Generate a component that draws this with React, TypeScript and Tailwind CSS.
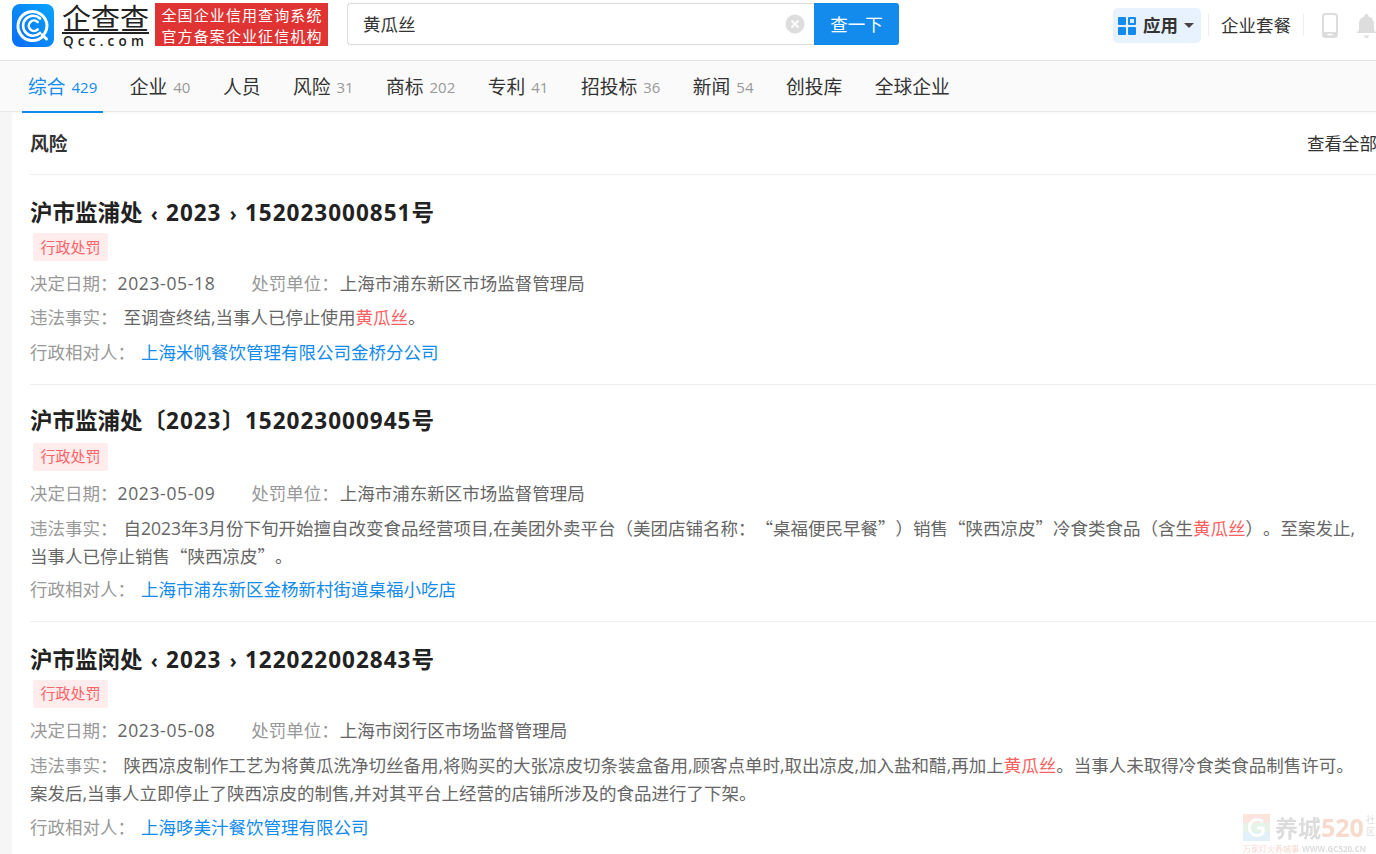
import React from "react";

const tabs: [string, string?][] = [
  ["企业", "40"], ["人员"], ["风险", "31"], ["商标", "202"], ["专利", "41"], ["招投标", "36"], ["新闻", "54"], ["创投库"], ["全球企业"],
];

const C = "\uFF1A";
const L = "\uFF08";
const R = "\uFF09";
const Lq = "\u201C";
const Rq = "\u201D";

function Logo() {
  return (
    <svg width="42" height="43" viewBox="0 0 42 43" className="shrink-0">
      <defs>
        <linearGradient id="lg" x1="0" y1="1" x2="1" y2="0">
          <stop offset="0" stopColor="#0a6cf5" />
          <stop offset="1" stopColor="#08a5ff" />
        </linearGradient>
      </defs>
      <rect width="42" height="43" rx="8" fill="url(#lg)" />
      <path d="M31.5 31.5A14.500 14.500 0 1 1 35 21.500c0 3-.8 5.500-2.200 7.600" fill="none" stroke="#fff" strokeWidth="3" strokeLinecap="round" />
      <path d="M28 14.500A10 10 0 1 0 28 29" fill="none" stroke="#fff" strokeWidth="2.600" strokeLinecap="round" />
      <path d="M25.600 18A5.200 5.200 0 1 0 25.600 25.500" fill="none" stroke="#fff" strokeWidth="2.600" strokeLinecap="round" />
      <path d="M30 30.500l4.500 4.500" stroke="#fff" strokeWidth="3" strokeLinecap="round" />
    </svg>
  );
}

function Tag({ mt = "mt-[5px]" }: { mt?: string }) {
  return (
    <div className={`ml-[3px] ${mt} flex h-[28px] w-[75px] items-center justify-center rounded-[2px] bg-[#ffecec] text-[15px] text-[#fb6468]`}>行政处罚</div>
  );
}

function Row({ label, children, mt }: { label: string; children: React.ReactNode; mt: string }) {
  return (
    <div className={`${mt} w-[1328px] font-['Noto_Sans_CJK_SC',sans-serif] text-[17.5px] leading-[28px] text-[#666] [text-spacing-trim:space-all]`}>
      <span className="text-[#999]">{label}</span>
      {children}
    </div>
  );
}

const Em = ({ children }: { children: React.ReactNode }) => <span className="text-[#fb5f5f]">{children}</span>;
const D = ({ children }: { children: React.ReactNode }) => <span className="font-['Open_Sans',sans-serif]">{children}</span>;
const Num = ({ children }: { children: React.ReactNode }) => <span className="tracking-[1px]">{children}</span>;
const Br = ({ children }: { children: React.ReactNode }) => <span className="inline-block w-[23.5px] text-center">{children}</span>;
const Ang = ({ children }: { children: React.ReactNode }) => <span className="inline-block w-[23.5px] text-center text-[19px] leading-none">{children}</span>;

// ASCII commas in the reference are narrower than the CJK font's own.
function T({ s }: { s: string }) {
  const parts = s.split(",");
  return (
    <>
      {parts.map((p, i) => (
        <React.Fragment key={i}>
          {p}
          {i < parts.length - 1 && <D>,</D>}
        </React.Fragment>
      ))}
    </>
  );
}

function Item(props: {
  title: React.ReactNode; date: string; org: string; fact: React.ReactNode; party: string; border?: boolean;
  pt: string; pb: string; tagMt?: string; dateMt: string; factMt: string; partyMt: string;
}) {
  return (
    <section className={`${props.pt} ${props.pb} ${props.border ? "border-b border-[#eee]" : ""}`}>
      <h3 className="text-[22.5px] font-bold leading-[30px] text-[#222]">{props.title}</h3>
      <Tag mt={props.tagMt} />
      <Row label={"决定日期" + C} mt={props.dateMt}>
        <span className="font-['Open_Sans',sans-serif] tracking-[0.65px]">{props.date}</span>
        <span className="ml-[36px] text-[#999]">{"处罚单位" + C}</span>
        <span className="ml-[1px]">{props.org}</span>
      </Row>
      <Row label={"违法事实" + C} mt={props.factMt}>
        <span className="ml-[6px]">{props.fact}</span>
      </Row>
      <Row label={"行政相对人" + C} mt={props.partyMt}>
        <span className="ml-[6px] text-[#128bed]">{props.party}</span>
      </Row>
    </section>
  );
}

export default function App() {
  return (
    <div className="relative h-[854px] w-[1376px] overflow-hidden bg-white font-['Open_Sans','Noto_Sans_CJK_SC',sans-serif]">
      <header className="flex h-[61px] items-start overflow-hidden border-b border-[#e6e6e6] bg-white [&>*]:shrink-0">
        <div className="ml-[12px] mt-[4px]"><Logo /></div>
        <div className="ml-[8px] mt-[1px] flex w-[87px] flex-col items-center text-[#222]">
          <div className="h-[33px] w-[87px] border-b-2 border-[#222] text-center font-['Noto_Sans_CJK_SC',sans-serif] text-[29px] leading-[32px]">企查查</div>
          <div className="mt-[1px] whitespace-nowrap text-[13.5px] font-semibold leading-[13px] tracking-[4.2px]">Qcc.com</div>
        </div>
        <div className="ml-[6px] mt-[3px] flex h-[43px] w-[173px] flex-col items-center justify-center bg-[#e03434] pl-[1px] font-['Noto_Sans_CJK_SC',sans-serif] text-[15px] leading-[21px] tracking-[1.1px] text-white">
          <div>全国企业信用查询系统</div>
          <div>官方备案企业征信机构</div>
        </div>
        <div className="ml-[19px] mt-[3px] flex h-[42px] w-[552px]">
          <div className="flex w-[467px] items-center justify-between rounded-l-[4px] border border-r-0 border-[#ddd] pl-[15px] pr-[9px] text-[17.5px] text-[#333]">
            <span>黄瓜丝</span>
            <svg width="20" height="20" viewBox="0 0 20 20">
              <circle cx="10" cy="10" r="9.500" fill="#ddd" />
              <path d="M6.500 6.500l7 7M13.500 6.500l-7 7" stroke="#fff" strokeWidth="1.800" />
            </svg>
          </div>
          <div className="flex w-[85px] items-center justify-center rounded-r-[3px] bg-[#128bed] text-[17.5px] text-white">查一下</div>
        </div>
        <div className="ml-[214px] mt-[8px] flex h-[35px] w-[88px] items-center rounded-[5px] bg-[#e8f2ff] pl-[5px]">
          <svg width="18" height="18" viewBox="0 0 18 18">
            <rect x="0" y="0" width="8" height="8" rx="1" fill="#128bed" />
            <rect x="10" y="0" width="8" height="8" rx="1" fill="#128bed" />
            <rect x="12" y="2" width="4" height="4" fill="#d6ebfd" />
            <rect x="0" y="10" width="8" height="8" rx="1" fill="#128bed" />
            <rect x="10" y="10" width="8" height="8" rx="1" fill="#128bed" />
          </svg>
          <span className="ml-[7px] text-[17.5px] font-bold text-[#333]">应用</span>
          <span className="ml-[6px] h-0 w-0 border-x-[5px] border-t-[5px] border-x-transparent border-t-[#444]" />
        </div>
        <div className="ml-[7px] mt-[14px] h-[22px] w-px bg-[#eee]" />
        <div className="ml-[12px] mt-[10px] whitespace-nowrap text-[17.5px] leading-[30px] text-[#333]">企业套餐</div>
        <div className="ml-[12px] mt-[14px] h-[22px] w-px bg-[#eee]" />
        <svg className="ml-[18px] mt-[13px]" width="16" height="25" viewBox="0 0 16 25">
          <rect x="1" y="1" width="14" height="23" rx="2.500" fill="none" stroke="#ddd" strokeWidth="2" />
          <rect x="1" y="19" width="14" height="5" rx="1.500" fill="#ddd" />
          <rect x="5.500" y="20.800" width="5" height="1.400" fill="#fff" />
        </svg>
        <svg className="ml-[18px] mt-[13px]" width="21" height="26" viewBox="0 0 21 26">
          <path d="M10.500 1c1.200 0 2 .8 2 2v.6c3.500.9 5.500 3.800 5.500 7.400v6l2.500 3H.5L3 17v-6c0-3.600 2-6.500 5.500-7.400V3c0-1.200.8-2 2-2z" fill="#ddd" />
          <path d="M8 22.500h5c0 1.500-1 2.500-2.500 2.500S8 24 8 22.500z" fill="#ddd" />
        </svg>
      </header>

      <nav className="flex h-[51px] items-start gap-[20.5px] border-b border-[#e8e8e8] bg-[#fafafa] pl-[22px] shadow-[0_1px_3px_rgba(0,0,0,0.04)]">
        <div className="flex h-[52px] items-center border-b-2 border-[#128bed] px-[6px] pt-[2px] text-[18.75px] text-[#128bed]">
          综合<span className="ml-[6px] text-[15px]">429</span>
        </div>
        {tabs.map(([name, n]) => (
          <div key={name} className="flex h-[52px] items-center border-b-2 border-transparent px-[6px] pt-[2px] text-[18.75px] text-[#333]">
            {name}
            {n && <span className="ml-[6px] text-[15px] text-[#999]">{n}</span>}
          </div>
        ))}
      </nav>

      <div className="flex">
        <div className="h-[742px] w-[12px] shrink-0 bg-[#f6f6f6]" />
        <main className="ml-[18px] w-[1347px] shrink-0">
          <div className="flex h-[63px] items-center justify-between border-b border-[#eee] pt-[1px]">
            <span className="pt-[1px] text-[18.75px] font-bold text-[#333]">风险</span>
            <span className="text-[17.5px] text-[#333]">查看全部</span>
          </div>
          <Item
            border
            pt="pt-[23px]"
            pb="pb-[17.5px]"
            dateMt="mt-[8px]"
            factMt="mt-[6px]"
            partyMt="mt-[7px]"
            title={<>沪市监浦处<Ang>‹</Ang><Num>2023</Num><Ang>›</Ang><Num>152023000851</Num>号</>}
            date="2023-05-18"
            org="上海市浦东新区市场监督管理局"
            fact={<><T s="至调查终结,当事人已停止使用" /><Em>黄瓜丝</Em>。</>}
            party="上海米帆餐饮管理有限公司金桥分公司"
          />
          <Item
            border
            pt="pt-[21px]"
            pb="pb-[18px]"
            tagMt="mt-[7px]"
            dateMt="mt-[8px]"
            factMt="mt-[7px]"
            partyMt="mt-[5px]"
            title={<>沪市监浦处<Br>〔</Br><Num>2023</Num><Br>〕</Br><Num>152023000945</Num>号</>}
            date="2023-05-09"
            org="上海市浦东新区市场监督管理局"
            fact={<>自<D>2023</D>年<D>3</D><T s={"月份下旬开始擅自改变食品经营项目,在美团外卖平台" + L + "美团店铺名称" + C + Lq + "桌福便民早餐" + Rq + R + "销售" + Lq + "陕西凉皮" + Rq + "冷食类食品" + L + "含生"} /><Em>黄瓜丝</Em><T s={R + "。至案发止,当事人已停止销售" + Lq + "陕西凉皮" + Rq + "。"} /></>}
            party="上海市浦东新区金杨新村街道桌福小吃店"
          />
          <Item
            pt="pt-[23px]"
            pb="pb-[18px]"
            dateMt="mt-[8px]"
            factMt="mt-[7px]"
            partyMt="mt-[6px]"
            title={<>沪市监闵处<Ang>‹</Ang><Num>2023</Num><Ang>›</Ang><Num>122022002843</Num>号</>}
            date="2023-05-08"
            org="上海市闵行区市场监督管理局"
            fact={<><T s="陕西凉皮制作工艺为将黄瓜洗净切丝备用,将购买的大张凉皮切条装盒备用,顾客点单时,取出凉皮,加入盐和醋,再加上" /><Em>黄瓜丝</Em><T s="。当事人未取得冷食类食品制售许可。案发后,当事人立即停止了陕西凉皮的制售,并对其平台上经营的店铺所涉及的食品进行了下架。" /></>}
            party="上海哆美汁餐饮管理有限公司"
          />
        </main>
      </div>

      <div className="absolute left-[1243px] top-[814px] flex items-start opacity-25 blur-[0.5px]">
        <svg width="27" height="27" viewBox="0 0 27 27">
          <rect width="27" height="9" fill="#f29a76" />
          <rect y="9" width="27" height="9" fill="#9ed2a8" />
          <rect y="18" width="27" height="9" fill="#8ec4e8" />
          <path d="M20 8a8 8 0 1 0 0 11v-5h-6" fill="none" stroke="#fff" strokeWidth="3" />
        </svg>
        <span className="ml-[5px] font-['Noto_Sans_CJK_SC',sans-serif] text-[23px] font-bold leading-[27px] text-[#777]">养城</span>
        <span className="text-[25px] font-bold leading-[27px] text-[#e0703a]">520</span>
        <span className="ml-[2px] w-[10px] text-[9px] leading-[12px] text-[#777]">社区</span>
      </div>
      <div className="absolute left-[1243px] top-[844px] whitespace-nowrap text-[8px] leading-[10px] opacity-25 blur-[0.3px]">
        <span className="text-[#e0553a]">万家灯火养城事</span>
        <span className="ml-[3px] font-bold text-[#777]">WWW.GC520.CN</span>
      </div>
    </div>
  );
}
